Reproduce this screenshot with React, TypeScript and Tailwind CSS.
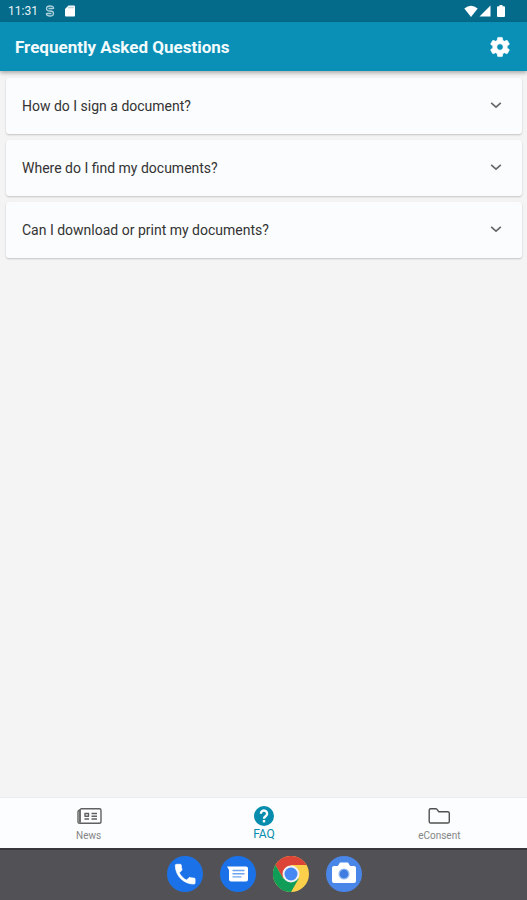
import { useState } from 'react';
import type { ReactNode } from 'react';

const questions = [
  'How do I sign a document?',
  'Where do I find my documents?',
  'Can I download or print my documents?',
];

function StatusBar() {
  return (
    <div className="flex h-[22px] items-center justify-between bg-[#056b8a] pl-2 pr-[22px] text-[#e6f3f7]">
      <div className="flex items-center">
        <span className="text-[12px] leading-4">11:31</span>
        <svg className="ml-[6px] h-3 w-3 opacity-75" viewBox="0 0 12 12" fill="none" stroke="currentColor" strokeWidth="1.3">
          <path d="M9.5 4V3Q9.5 1 6 1T2.500 3.500Q2.500 6 6 6T9.500 8.500Q9.500 11 6 11T2.500 9V8" />
          <path d="M4.500 3.500H9M3 8.500H7.500" />
        </svg>
        <svg className="ml-2 h-3 w-3" viewBox="0 0 12 12">
          <path fill="#fff" d="M4.5 0.5H10a1 1 0 0 1 1 1v9a1 1 0 0 1-1 1H2a1 1 0 0 1-1-1V4z" />
          <path stroke="#056b8a" strokeWidth="0.5" d="M5 1.8v1.5M7 1.8v1.5M9 1.8v1.5" />
        </svg>
      </div>
      <div className="flex items-center gap-px">
        <svg className="h-3 w-[14px]" viewBox="0 0 14 12" fill="#fff">
          <path d="M7 12 0.3 3.5Q7-1.8 13.7 3.5z" />
        </svg>
        <svg className="h-3 w-3" viewBox="0 0 12 12" fill="#fff">
          <path d="M11.5 0.5V11.5H0.5z" />
        </svg>
        <svg className="ml-[5px] h-3 w-2" viewBox="0 0 8 12" fill="#fff">
          <path d="M2.5 0h3v1.3H7q1 0 1 1V11q0 1-1 1H1q-1 0-1-1V2.3q0-1 1-1h1.5z" />
        </svg>
      </div>
    </div>
  );
}

function Header() {
  return (
    <header className="relative flex h-[49px] items-center justify-between bg-[#0a90b6] px-[15px] shadow-[0_2px_4px_rgba(0,0,0,0.3)]">
      <h1 className="text-[17px] font-bold leading-6 text-[#f3fbfd]">Frequently Asked Questions</h1>
      <button type="button" aria-label="Settings" className="flex h-6 w-6 items-center justify-center">
        <svg className="h-6 w-6 shrink-0" viewBox="0 0 24 24" fill="#fff" stroke="#fff" strokeWidth="0.6">
          <path d="M19.14 12.94c.04-.3.06-.61.06-.94 0-.32-.02-.64-.07-.94l2.03-1.58c.18-.14.23-.41.12-.61l-1.92-3.32c-.12-.22-.37-.29-.59-.22l-2.39.96c-.5-.38-1.03-.7-1.62-.94l-.36-2.54c-.04-.24-.24-.41-.48-.41h-3.84c-.24 0-.43.17-.47.41l-.36 2.54c-.59.24-1.13.57-1.62.94l-2.39-.96c-.22-.08-.47 0-.59.22L2.74 8.87c-.12.21-.08.47.12.61l2.03 1.58c-.05.3-.09.63-.09.94s.02.64.07.94l-2.03 1.58c-.18.14-.23.41-.12.61l1.92 3.32c.12.22.37.29.59.22l2.39-.96c.5.38 1.03.7 1.62.94l.36 2.54c.05.24.24.41.48.41h3.84c.24 0 .44-.17.47-.41l.36-2.54c.59-.24 1.13-.56 1.62-.94l2.39.96c.22.08.47 0 .59-.22l1.92-3.32c.12-.22.07-.47-.12-.61l-2.01-1.58zM12 15.2c-1.76 0-3.2-1.44-3.2-3.2s1.44-3.2 3.2-3.2 3.2 1.44 3.2 3.2-1.44 3.2-3.2 3.2z" />
        </svg>
      </button>
    </header>
  );
}

function QuestionCard({ question }: { question: string }) {
  return (
    <button
      type="button"
      className="flex h-14 w-full items-center justify-between rounded-[3px] bg-[#fbfcfd] pl-4 pr-5 text-left shadow-[0_1px_2px_rgba(0,0,0,0.2)]"
    >
      <span className="text-[14px] leading-5 text-[#333]">{question}</span>
      <svg className="h-3 w-3" viewBox="0 0 12 12" fill="none" stroke="#666" strokeWidth="1.6">
        <path d="M1.2 2.8 6 7.2 10.8 2.8" />
      </svg>
    </button>
  );
}

const NewsIcon = (
  <svg className="h-5 w-[26px]" viewBox="0 0 26 20" fill="none" stroke="#606060" strokeWidth="1.4">
    <path d="M5.2 2.8H23.5q1.5 0 1.5 1.5V15.500q0 1.800-1.800 1.800H4q-2 0-2-1.800V6q0-1.200 1.200-1.800z" />
    <path strokeWidth="1.8" d="M4 4V16.500" />
    <path d="M8.500 7.500h4.500M15.500 7.500h5.500M8.500 10.200h4.500M15.500 10.200h5.500M8.500 13h4.500M15.500 13h5.500M9 7v3.500M12.500 7v3.500" />
  </svg>
);

const FaqIcon = (
  <svg className="h-5 w-5 shrink-0" viewBox="0 0 20 20">
    <circle cx="10" cy="10" r="10" fill="#078cad" />
    <path d="M6.9 7.7a3.1 3 0 1 1 5.1 2.2c-1.2.9-2 1.4-2 2.9" fill="none" stroke="#fff" strokeWidth="2.4" />
    <rect x="8.8" y="14" width="2.4" height="2.4" fill="#fff" />
  </svg>
);

const FolderIcon = (
  <svg className="h-5 w-6" viewBox="0 0 24 20" fill="none" stroke="#505050" strokeWidth="1.4" strokeLinejoin="round">
    <path d="M2.2 15.4V4.300q0-1.500 1.500-1.500h5q.8 0 1.300.6L11.800 5.700h8.900q1.600 0 1.600 1.600v8.100q0 1.600-1.600 1.600H3.800q-1.600 0-1.600-1.600z" />
  </svg>
);

const tabs = [
  { name: 'News', icon: NewsIcon },
  { name: 'FAQ', icon: FaqIcon },
  { name: 'eConsent', icon: FolderIcon },
];

function TabBar() {
  const [active, setActive] = useState('FAQ');

  return (
    <nav className="grid h-[51px] grid-cols-3 border-t border-[#ececec] bg-[#fbfdfe] pl-px">
      {tabs.map((tab) => (
        <button
          key={tab.name}
          type="button"
          onClick={() => setActive(tab.name)}
          className="flex flex-col items-center pt-2"
        >
          {tab.icon}
          <span className={active === tab.name ? 'text-[12px] leading-4 text-[#078cad]' : 'text-[10px] leading-5 text-[#858585]'}>
            {tab.name}
          </span>
        </button>
      ))}
    </nav>
  );
}

function DockButton({ label, children }: { label: string; children: ReactNode }) {
  return (
    <button type="button" aria-label={label}>
      <svg className="h-9 w-9" viewBox="0 0 36 36">
        {children}
      </svg>
    </button>
  );
}

function Dock() {
  return (
    <div className="flex h-[52px] items-center justify-center gap-[17px] border-t-2 border-[#38383c] bg-[#525256] pb-0.5 pl-0.5">
      <DockButton label="Phone">
        <circle cx="18" cy="18" r="18" fill="#1b72e8" />
        <path
          fill="#fff"
          transform="translate(5 5) scale(1.1)"
          stroke="#fff"
          strokeWidth="0.6"
          d="M6.62 10.79c1.44 2.83 3.76 5.14 6.59 6.59l2.2-2.2c.27-.27.67-.36 1.02-.24 1.12.37 2.33.57 3.57.57.55 0 1 .45 1 1V20c0 .55-.45 1-1 1-9.39 0-17-7.61-17-17 0-.55.45-1 1-1h3.5c.55 0 1 .45 1 1 0 1.25.2 2.45.57 3.57.11.35.03.74-.25 1.02l-2.2 2.2z"
        />
      </DockButton>
      <DockButton label="Messages">
        <circle cx="18" cy="18" r="18" fill="#1b72e8" />
        <path fill="#fff" d="M7 10.5h19q2 0 2 2v11q0 2-2 2H11q-2 0-2-2V14z" />
        <path stroke="#6da4ef" strokeWidth="1.4" d="M12.5 14.5h12M12.5 17.7h12M12.5 20.9h9" />
      </DockButton>
      <DockButton label="Chrome">
        <circle cx="18" cy="18" r="18" fill="#fcd04b" />
        <path fill="#dc4437" d="M2.4 9A18 18 0 0 1 33.6 9H18L10.2 22.5z" />
        <path fill="#109d58" d="M2.4 9A18 18 0 0 0 18 36L25.8 22.5H10.2z" />
        <circle cx="18" cy="18" r="8.5" fill="#f1f1f1" />
        <circle cx="18" cy="18" r="6.5" fill="#4688f4" />
      </DockButton>
      <DockButton label="Camera">
        <circle cx="18" cy="18" r="18" fill="#4a86e8" />
        <path fill="#fff" d="M14 6.5h8l2.2 3.5H28q2 0 2 2v13q0 2-2 2H8q-2 0-2-2V12q0-2 2-2h3.800z" />
        <circle cx="18" cy="18" r="5" fill="#3f7de0" stroke="#9bbff5" strokeWidth="1.2" />
      </DockButton>
    </div>
  );
}

export default function App() {
  return (
    <div className="flex min-h-screen flex-col bg-[#f4f4f4] font-['Roboto',sans-serif]">
      <StatusBar />
      <Header />
      <main className="flex flex-1 flex-col gap-[6px] pb-[6px] pl-[6px] pr-[5px] pt-[7px]">
        {questions.map((question) => (
          <QuestionCard key={question} question={question} />
        ))}
      </main>
      <TabBar />
      <Dock />
    </div>
  );
}
